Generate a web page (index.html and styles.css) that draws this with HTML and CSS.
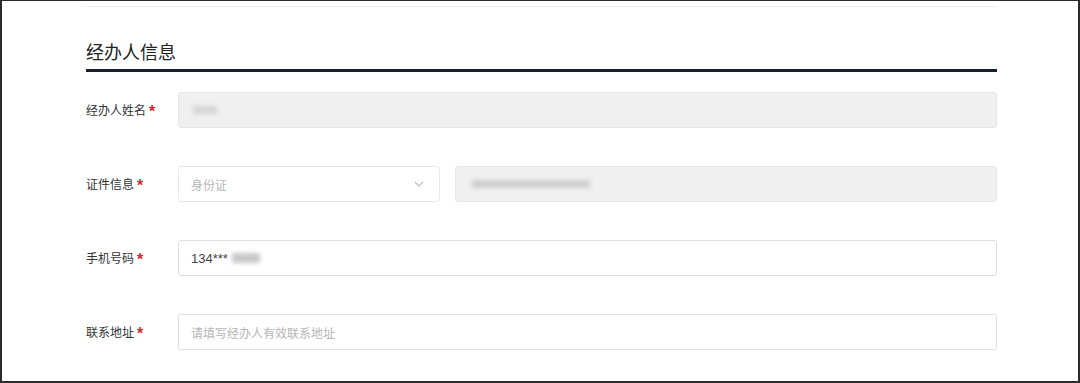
FILE: index.html
```html
<!DOCTYPE html>
<html lang="zh-CN">

<head>
    <meta charset="UTF-8">
    <meta name="viewport" content="width=device-width, initial-scale=1.0">
    <title>经办人信息</title>
    <link rel="stylesheet" href="styles.css">
</head>

<body>
    <div class="frame">
        <div class="top-rule"></div>
        <div class="section">
            <h2 class="section-title">经办人信息</h2>

            <div class="form">
                <div class="row">
                    <label class="label">经办人姓名<span class="req">*</span></label>
                    <div class="field">
                        <div class="input disabled"><span class="blur short"></span></div>
                    </div>
                </div>

                <div class="row">
                    <label class="label">证件信息<span class="req">*</span></label>
                    <div class="field split">
                        <div class="input select">
                            <span class="placeholder">身份证</span>
                            <svg class="chevron" width="10" height="6" viewBox="0 0 10 6">
                                <path d="M1 1 L5 5 L9 1" fill="none" stroke="#bbb" stroke-width="1.1" />
                            </svg>
                        </div>
                        <div class="input disabled"><span class="blur long"></span></div>
                    </div>
                </div>

                <div class="row">
                    <label class="label">手机号码<span class="req">*</span></label>
                    <div class="field">
                        <div class="input"><span class="value">134***</span><span class="blur phone"></span></div>
                    </div>
                </div>

                <div class="row">
                    <label class="label">联系地址<span class="req">*</span></label>
                    <div class="field">
                        <div class="input"><span class="placeholder">请填写经办人有效联系地址</span></div>
                    </div>
                </div>
            </div>
        </div>
    </div>
</body>

</html>
```

FILE: styles.css
```css
body {
    margin: 0;
    font-family: "Liberation Sans", "Noto Sans CJK SC", sans-serif;
    background-color: #fff;
    color: #333;
}

.frame {
    box-sizing: border-box;
    width: 1080px;
    height: 383px;
    border: 2px solid #2b2b2b;
    border-top-width: 1px;
    overflow: hidden;
    padding: 5px 81px 0 84px;
}

.top-rule {
    height: 1px;
    background-color: #f0f0f0;
}

.section-title {
    margin: 34px 0 0;
    font-size: 18px;
    font-weight: normal;
    line-height: 25px;
    color: #222;
    padding-bottom: 3px;
    border-bottom: 3px solid #17212e;
}

.form {
    display: flex;
    flex-direction: column;
    gap: 38px;
    padding-top: 20px;
}

.row {
    display: flex;
    align-items: center;
    height: 36px;
}

.label {
    width: 92px;
    font-size: 12px;
    color: #333;
    white-space: nowrap;
}

.req {
    color: #d9262c;
    margin-left: 3px;
    font-size: 16px;
    font-weight: bold;
    position: relative;
    top: 2px;
}

.field {
    flex: 1;
    display: flex;
    gap: 15px;
    height: 36px;
}

.input {
    flex: 1;
    box-sizing: border-box;
    height: 36px;
    border: 1px solid #dedede;
    border-radius: 3px;
    background-color: #fff;
    display: flex;
    align-items: center;
    padding: 0 12px;
    font-size: 12px;
    color: #333;
}

.input.disabled {
    background-color: #f0f0f0;
    border-color: #e6e6e6;
}

.input.select {
    flex: 0 0 262px;
    justify-content: space-between;
    border-color: #e8e8e8;
}

.chevron {
    margin-right: 3px;
}

.placeholder {
    color: #b5b5b5;
}

.value {
    color: #444;
    font-size: 13px;
}

.blur {
    display: inline-block;
    height: 8px;
    background-color: #d6d6d6;
    filter: blur(2px);
}

.blur.short {
    width: 24px;
    margin-left: 2px;
}

.blur.long {
    width: 118px;
    margin-left: 4px;
    background-color: #cfcfcf;
}

.blur.phone {
    width: 28px;
    height: 10px;
    margin-left: 4px;
    background-color: #c8c8c8;
}
```
